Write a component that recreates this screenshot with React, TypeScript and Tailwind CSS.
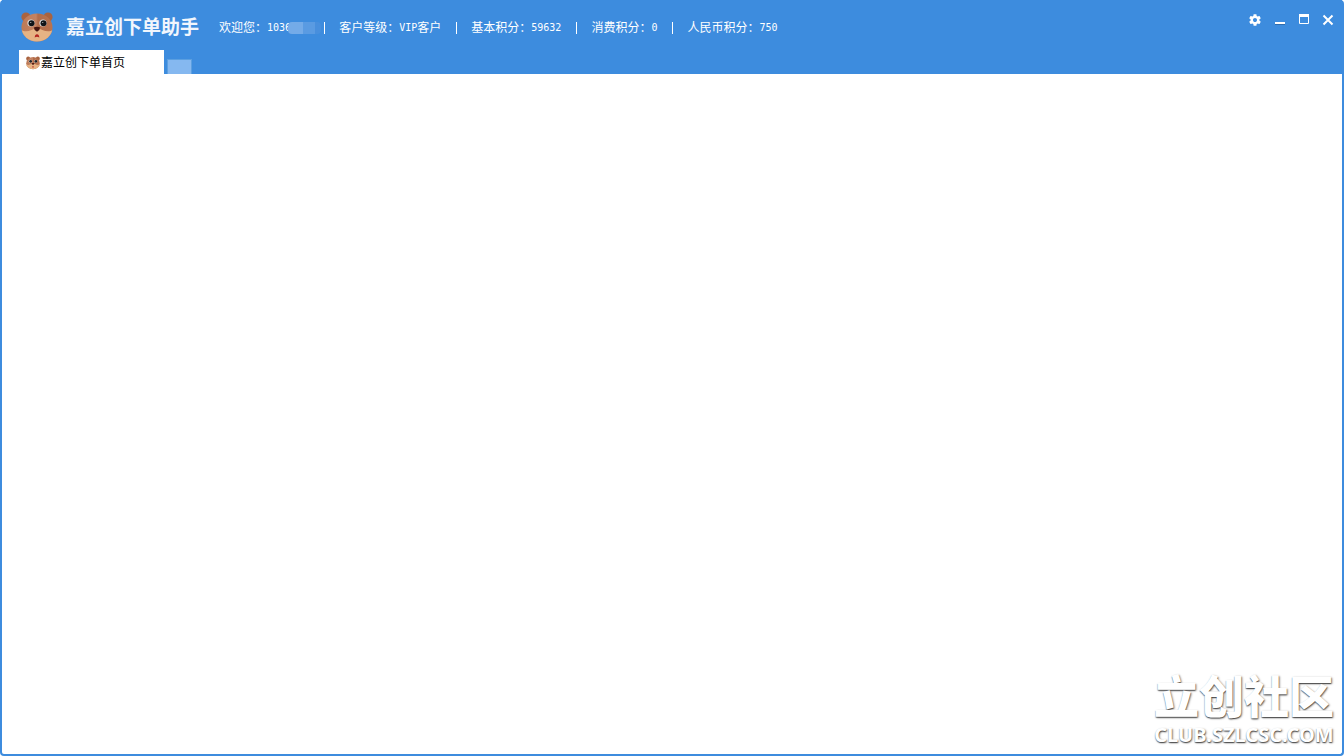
import React from 'react';

const stats = [
  { label: '客户等级', value: 'VIP', suffix: '客户' },
  { label: '基本积分', value: '59632' },
  { label: '消费积分', value: '0' },
  { label: '人民币积分', value: '750' },
];

const BearIcon = ({ className, id }: { className: string; id: string }) => (
  <svg viewBox="0 0 32 30" className={className} aria-hidden="true">
    <defs>
      <linearGradient id={id} x1="0" y1="0" x2="1" y2="0">
        <stop offset="0" stopColor="#bd7a56" />
        <stop offset="0.47" stopColor="#c48262" />
        <stop offset="0.53" stopColor="#b26d4b" />
        <stop offset="1" stopColor="#b9734f" />
      </linearGradient>
      <clipPath id={`${id}-face`}>
        <ellipse cx="16" cy="15.500" rx="15.500" ry="14" />
      </clipPath>
    </defs>
    <circle cx="5" cy="5" r="4.600" fill="#a9633f" />
    <circle cx="27" cy="5" r="4.600" fill="#a9633f" />
    <ellipse cx="16" cy="15.500" rx="15.500" ry="14" fill={`url(#${id})`} />
    <g clipPath={`url(#${id}-face)`}>
      <path d="M0 18 C5 21 11 18.500 16 15 C21 18.500 27 21 32 18 V30 H0 Z" fill="#e6b384" />
    </g>
    <circle cx="10" cy="11" r="3.600" fill="#dfe3e5" />
    <circle cx="22" cy="11" r="3.600" fill="#dfe3e5" />
    <circle cx="10.500" cy="11.200" r="3" fill="#101418" />
    <circle cx="22.500" cy="11.200" r="3" fill="#101418" />
    <circle cx="9.800" cy="10.400" r="0.500" fill="#fff" />
    <circle cx="21.800" cy="10.400" r="0.500" fill="#fff" />
    <path d="M12.800 15.500 Q16 14 19.200 15.500 Q19 18.300 16 19.800 Q13 18.300 12.800 15.500 Z" fill="#46150f" />
    <path d="M13.700 25.500 Q14 22.300 16 22.300 Q18 22.300 18.300 25.500 Q16 24.200 13.700 25.500 Z" fill="#b3221f" />
  </svg>
);

const Separator = () => <span className="mr-[14px] ml-[15px] h-3 w-px bg-white" />;

const WindowControls = () => (
  <div className="mt-3 mr-[6px] flex gap-2 text-white">
    <button aria-label="设置" className="flex size-4 items-center">
      <svg viewBox="0 0 24 24" className="size-[14px]" fill="currentColor">
        <path d="M19.430 12.980c.04-.32.07-.64.07-.98s-.03-.66-.07-.98l2.110-1.650c.19-.15.24-.42.12-.64l-2-3.460c-.12-.22-.39-.3-.61-.22l-2.490 1c-.52-.4-1.080-.73-1.690-.98l-.38-2.650C14.460 2.180 14.250 2 14 2h-4c-.25 0-.46.18-.49.42l-.38 2.650c-.61.25-1.170.59-1.690.98l-2.490-1c-.23-.09-.49 0-.61.22l-2 3.460c-.13.22-.07.49.12.64l2.110 1.650c-.04.32-.07.65-.07.98s.03.66.07.98l-2.110 1.650c-.19.15-.24.42-.12.64l2 3.460c.12.22.39.3.61.22l2.490-1c.52.4 1.080.73 1.690.98l.38 2.650c.03.24.24.42.49.42h4c.25 0 .46-.18.49-.42l.38-2.650c.61-.25 1.170-.59 1.690-.98l2.490 1c.23.09.49 0 .61-.22l2-3.460c.12-.22.07-.49-.12-.64l-2.110-1.650zM12 15.500c-1.930 0-3.500-1.570-3.500-3.500s1.570-3.500 3.500-3.500 3.500 1.570 3.500 3.500-1.570 3.500-3.500 3.500z" />
      </svg>
    </button>
    <button aria-label="最小化" className="size-4">
      <svg viewBox="0 0 16 16" className="size-4">
        <path d="M3 12.500h10" stroke="#2f6cab" strokeWidth="1" />
        <path d="M3 11h10" stroke="currentColor" strokeWidth="2" />
      </svg>
    </button>
    <button aria-label="最大化" className="size-4">
      <svg viewBox="0 0 16 16" className="size-4" fill="none" stroke="currentColor">
        <path d="M3.500 2.500h9v9h-9z" />
        <path d="M3 3.500h10" strokeWidth="3" />
      </svg>
    </button>
    <button aria-label="关闭" className="size-4">
      <svg viewBox="0 0 16 16" className="size-4" fill="none" stroke="currentColor" strokeWidth="2">
        <path d="M3.500 3.500l9 9M12.500 3.500l-9 9" />
      </svg>
    </button>
  </div>
);

const App = () => {
  return (
    <div className="flex min-h-screen flex-col rounded-sm border-2 border-t-0 border-[#3d8cde] bg-white font-['Liberation_Sans','Noto_Sans_CJK_SC',sans-serif]">
      <header className="bg-[#3d8cde]">
        <div className="flex h-[50px] items-start justify-between">
          <div className="flex items-start pt-3 pl-[19px] text-white">
            <BearIcon id="bear-logo" className="h-[30px] w-8" />
            <h1 className="mt-1 ml-[13px] font-['Liberation_Serif','Noto_Sans_CJK_SC',serif] text-[19px] leading-6 font-bold whitespace-nowrap text-[#f1f6fd]">
              嘉立创下单助手
            </h1>
            <div className="mt-2 ml-5 flex items-center text-xs leading-4 whitespace-nowrap">
              <span>欢迎您：</span>
              <span className="font-['DejaVu_Sans_Mono',monospace] text-[10px]">1036</span>
              <span className="-ml-[3px] flex h-3 w-[33px] shrink-0 overflow-hidden rounded-sm">
                <span className="w-[15px] bg-[#74abe8]" />
                <span className="w-3 bg-[#5a9be2]" />
                <span className="w-[6px] bg-[#488fdd]" />
              </span>
              <span className="mr-[14px] ml-[3px] h-3 w-px bg-white" />
              {stats.map((s, i) => (
                <React.Fragment key={s.label}>
                  {i > 0 && <Separator />}
                  <span>{s.label}：</span>
                  <span className="font-['DejaVu_Sans_Mono',monospace] text-[10px]">{s.value}</span>
                  {s.suffix && <span>{s.suffix}</span>}
                </React.Fragment>
              ))}
            </div>
          </div>
          <WindowControls />
        </div>

        <nav className="flex h-6 items-end gap-[3px] pl-[17px]">
          <button className="flex h-6 w-[145px] items-center bg-white pt-px pl-[7px] text-xs whitespace-nowrap text-black">
            <BearIcon id="bear-tab" className="mr-px h-[14px] w-[14px]" />
            嘉立创下单首页
          </button>
          <button aria-label="新建标签页" className="h-[15px] w-[25px] border border-b-0 border-[#5b9fe0] bg-[#85b8f0]" />
        </nav>
      </header>

      <main className="flex flex-1 items-end justify-end">
        <div className="mr-2 mb-2 flex flex-col items-center gap-1 text-white [text-shadow:0_1px_1px_rgb(0_0_0/0.5),1px_1px_2px_rgb(0_0_0/0.5)]">
          <span className="font-['Noto_Sans_CJK_SC',sans-serif] text-[45px] leading-[50px] font-black">立创社区</span>
          <span className="font-['Noto_Sans',sans-serif] text-xl leading-[22px] font-bold">CLUB.SZLCSC.COM</span>
        </div>
      </main>
    </div>
  );
};

export default App;
